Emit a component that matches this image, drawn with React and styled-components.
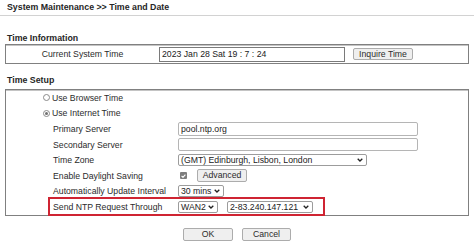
import React from 'react';
import styled, { createGlobalStyle } from 'styled-components';

const GlobalStyle = createGlobalStyle`
  html, body {
    margin: 0;
    padding: 0;
    background: #ffffff;
  }
  body {
    font-family: "Liberation Sans", Arial, sans-serif;
    font-size: 8.7px;
    color: #2b2b2b;
  }
`

const Page = styled.div`
  width: 474px;
  height: 251px;
  overflow: hidden;
`

const Header = styled.div`
  height: 15px;
  line-height: 14px;
  padding-left: 7px;
  font-weight: bold;
  font-size: 8.8px;
  color: #262626;
  border-bottom: 1px solid #d2d2d2;
`

const Content = styled.div`
  padding: 0 5px;
`

const SectionTitle = styled.div`
  padding-left: 2px;
  font-weight: bold;
  font-size: 8.8px;
  line-height: 10px;
  color: #262626;
  margin-top: ${(p) => p.$top}px;
  margin-bottom: ${(p) => p.$bottom}px;
`

const Box = styled.div`
  border: 1px solid #808080;
  box-shadow: inset 0 1px 0 #c4c4c4;
`

const InfoRow = styled.div`
  display: grid;
  grid-template-columns: 153px 186px 68px;
  align-items: center;
  height: 18px;
`

const InfoLabel = styled.div`
  text-align: center;
`

const TextInput = styled.input`
  box-sizing: border-box;
  width: ${(p) => p.$w}px;
  height: ${(p) => p.$h || 14}px;
  padding: 0 2px;
  margin: 0;
  border: 1px solid ${(p) => (p.$dark ? '#7a7a7a' : '#b5b5b5')};
  border-radius: ${(p) => (p.$dark ? 0 : 2)}px;
  font-family: inherit;
  font-size: 8.7px;
  color: #222;
  background: #fff;
  outline: none;
`

const Button = styled.button`
  box-sizing: border-box;
  width: ${(p) => p.$w}px;
  height: ${(p) => p.$h || 13}px;
  padding: 0;
  margin: 0 0 0 ${(p) => p.$ml || 0}px;
  border: 1px solid #acacac;
  border-radius: 2px;
  background: #efefef;
  font-family: inherit;
  font-size: 8.7px;
  color: #2b2b2b;
  line-height: 1;
`

const SetupBox = styled(Box)`
  display: grid;
  grid-auto-rows: 15.6px;
`

const RadioRow = styled.label`
  display: flex;
  align-items: center;
  gap: 2px;
  padding-left: 37px;
`

const Radio = styled.span`
  box-sizing: border-box;
  width: 7px;
  height: 7px;
  border-radius: 50%;
  border: 1px solid #8a8a8a;
  background: #fff;
  display: inline-flex;
  align-items: center;
  justify-content: center;
  &::after {
    content: '';
    width: 3px;
    height: 3px;
    border-radius: 50%;
    background: ${(p) => (p.$checked ? '#707070' : 'transparent')};
  }
`

const Row = styled.div`
  display: grid;
  grid-template-columns: 125px auto;
  align-items: center;
  padding-left: 47px;
`

const HighlightRow = styled(Row)`
  position: relative;
  box-sizing: border-box;
  width: 277px;
  height: 19px;
  margin: -1.7px 0 -1.7px 42px;
  padding-left: 3px;
  border: 2px solid #cf2432;
`

const Controls = styled.div`
  display: flex;
  align-items: center;
  gap: ${(p) => p.$gap || 0}px;
`

const SelectBox = styled.div`
  box-sizing: border-box;
  display: flex;
  align-items: center;
  justify-content: space-between;
  gap: 2px;
  width: ${(p) => p.$w}px;
  height: ${(p) => p.$h || 12}px;
  padding: 0 3px 0 2px;
  border: 1px solid #9c9c9c;
  border-radius: 2px;
  background: #fff;
  color: #222;
  white-space: nowrap;
`

const Check = styled.span`
  box-sizing: border-box;
  width: 7px;
  height: 7px;
  margin: 0 10px 0 2px;
  border-radius: 1px;
  background: #7d7d7d;
  display: inline-flex;
  align-items: center;
  justify-content: center;
`

const Footer = styled.div`
  display: flex;
  justify-content: center;
  gap: 9px;
  margin-top: 12px;
`

function Chevron() {
  return (
    <svg width="6" height="4" viewBox="0 0 6 4">
      <path d="M0.7 0.7 L3 3 L5.3 0.7" fill="none" stroke="#222" strokeWidth="1.3" />
    </svg>
  )
}

function Select({ w, h, children }) {
  return (
    <SelectBox $w={w} $h={h}>
      <span>{children}</span>
      <Chevron />
    </SelectBox>
  )
}

export default function App() {
  return (
    <Page>
      <GlobalStyle />
      <Header>System Maintenance &gt;&gt; Time and Date</Header>
      <Content>
        <SectionTitle $top={17} $bottom={1}>Time Information</SectionTitle>
        <Box>
          <InfoRow>
            <InfoLabel>Current System Time</InfoLabel>
            <TextInput $w={186} $h={15} $dark readOnly value="2023 Jan 28 Sat 19 : 7 : 24" />
            <Button $w={60} $h={12} $ml={8}>Inquire Time</Button>
          </InfoRow>
        </Box>

        <SectionTitle $top={11} $bottom={4}>Time Setup</SectionTitle>
        <SetupBox>
          <RadioRow>
            <Radio />
            Use Browser Time
          </RadioRow>
          <RadioRow>
            <Radio $checked />
            Use Internet Time
          </RadioRow>
          <Row>
            <span>Primary Server</span>
            <TextInput $w={240} $h={14} readOnly value="pool.ntp.org" />
          </Row>
          <Row>
            <span>Secondary Server</span>
            <TextInput $w={240} $h={13} readOnly value="" />
          </Row>
          <Row>
            <span>Time Zone</span>
            <Controls>
              <Select w={189}>(GMT) Edinburgh, Lisbon, London</Select>
            </Controls>
          </Row>
          <Row>
            <span>Enable Daylight Saving</span>
            <Controls>
              <Check>
                <svg width="5" height="4" viewBox="0 0 5 4">
                  <path d="M0.6 2 L2 3.3 L4.4 0.6" fill="none" stroke="#fff" strokeWidth="1.1" />
                </svg>
              </Check>
              <Button $w={50} $h={13}>Advanced</Button>
            </Controls>
          </Row>
          <Row>
            <span>Automatically Update Interval</span>
            <Controls>
              <Select w={46}>30 mins</Select>
            </Controls>
          </Row>
          <HighlightRow>
            <span>Send NTP Request Through</span>
            <Controls $gap={9}>
              <Select w={40}>WAN2</Select>
              <Select w={86}>2-83.240.147.121</Select>
            </Controls>
          </HighlightRow>
        </SetupBox>

        <Footer>
          <Button $w={50} $h={13}>OK</Button>
          <Button $w={49} $h={13}>Cancel</Button>
        </Footer>
      </Content>
    </Page>
  )
}
